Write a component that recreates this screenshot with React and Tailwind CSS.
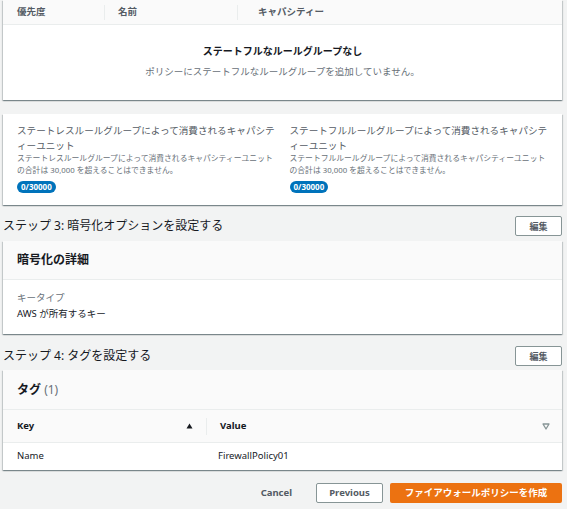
import React from "react";

const font = { fontFamily: '"Noto Sans", "Noto Sans CJK JP", sans-serif' };

function EditButton() {
  return (
    <button className="w-[47px] h-[20px] border border-[#879596] rounded-[2px] bg-white text-[9px] font-bold text-[#545b64] leading-none">
      編集
    </button>
  );
}

function Card({ children, className = "" }) {
  return (
    <div className={"bg-white shadow-[0_1px_1px_0_rgba(0,28,36,0.3),1px_1px_1px_0_rgba(0,28,36,0.15),-1px_1px_1px_0_rgba(0,28,36,0.15)] " + className}>
      {children}
    </div>
  );
}

export default function App() {
  return (
    <div className="w-[567px] h-[509px] bg-[#f2f3f3] overflow-hidden pl-[3px] pr-[5px]" style={font}>
      {/* Card 1 */}
      <Card className="h-[100px] flex flex-col">
        <div className="h-[25px] bg-[#fafafa] border-b border-[#eaeded] grid grid-cols-[101px_133px_1fr] items-center text-[9.5px] font-bold text-[#545b64]">
          <div className="pl-[14px] leading-none">優先度</div>
          <div className="pl-[13px] border-l border-[#eaeded] h-[15px] flex items-center">名前</div>
          <div className="pl-[20px] border-l border-[#eaeded] h-[15px] flex items-center">キャパシティー</div>
        </div>
        <div className="flex-1 flex flex-col items-center pt-[19px]">
          <div className="text-[10px] font-bold text-[#16191f] leading-[14px]">ステートフルなルールグループなし</div>
          <div className="text-[9.5px] text-[#687078] leading-[14px] mt-[7px]">ポリシーにステートフルなルールグループを追加していません。</div>
        </div>
      </Card>

      {/* Card 2 */}
      <Card className="mt-[14px] h-[91px] px-[14px] pt-[10px] grid grid-cols-2 gap-x-[14px]">
        {["ステートレス", "ステートフル"].map((k) => (
          <div key={k} className="flex flex-col items-start">
            <p className="text-[9.6px] leading-[14.5px] text-[#545b64]">{k}ルールグループによって消費されるキャパシティーユニット</p>
            <p className="text-[7.8px] leading-[11.5px] text-[#687078]">{k}ルールグループによって消費されるキャパシティーユニットの合計は 30,000 を超えることはできません。</p>
            <div className="mt-[5px] h-[12px] px-[4px] rounded-full bg-[#0073bb] text-white text-[8px] font-bold leading-[12px]">0/30000</div>
          </div>
        ))}
      </Card>

      {/* Step 3 */}
      <div className="mt-[11px] flex items-center justify-between">
        <div className="text-[12px] text-[#16191f] leading-none">ステップ 3: 暗号化オプションを設定する</div>
        <EditButton />
      </div>
      <Card className="mt-[5px] h-[93px] flex flex-col">
        <div className="h-[39px] bg-[#fafafa] border-b border-[#eaeded] flex items-center pl-[14px]">
          <div className="text-[12px] font-bold text-[#16191f] leading-none">暗号化の詳細</div>
        </div>
        <div className="pl-[14px] pt-[11px] flex flex-col gap-[3px]">
          <div className="text-[9.5px] text-[#687078] leading-[13px]">キータイプ</div>
          <div className="text-[9.5px] text-[#16191f] leading-[13px]">AWS が所有するキー</div>
        </div>
      </Card>

      {/* Step 4 */}
      <div className="mt-[12px] flex items-center justify-between">
        <div className="text-[12px] text-[#16191f] leading-none">ステップ 4: タグを設定する</div>
        <EditButton />
      </div>
      <Card className="mt-[4px] h-[100px] flex flex-col">
        <div className="h-[40px] bg-[#fafafa] border-b border-[#eaeded] flex items-center pl-[14px]">
          <div className="text-[12px] font-bold text-[#16191f] leading-none">
            タグ <span className="font-normal text-[#687078]">(1)</span>
          </div>
        </div>
        <div className="h-[33px] bg-[#fafafa] border-b border-[#eaeded] grid grid-cols-[203px_1fr] items-center text-[9.5px] font-bold text-[#16191f]">
          <div className="pl-[14px] pr-[13px] flex items-center justify-between">
            <span>Key</span>
            <svg width="7" height="6" viewBox="0 0 7 6"><path d="M3.5 0.5 L6.5 5.5 L0.5 5.5 Z" fill="#16191f" /></svg>
          </div>
          <div className="border-l border-[#eaeded] h-[17px] pl-[13px] pr-[12px] flex items-center justify-between">
            <span>Value</span>
            <svg width="8" height="7" viewBox="0 0 8 7"><path d="M1 1 L7 1 L4 6 Z" fill="none" stroke="#879596" strokeWidth="1.3" strokeLinejoin="round" /></svg>
          </div>
        </div>
        <div className="flex-1 grid grid-cols-[201px_1fr] items-center text-[9.5px] text-[#16191f]">
          <div className="pl-[14px]">Name</div>
          <div className="pl-[14px]">FirewallPolicy01</div>
        </div>
      </Card>

      {/* Footer */}
      <div className="mt-[13px] flex items-center justify-end">
        <button className="h-[20px] px-[2px] text-[9.5px] font-bold text-[#545b64] mr-[22px]">Cancel</button>
        <button className="h-[20px] w-[67px] border border-[#879596] rounded-[2px] bg-white text-[9.5px] font-bold text-[#545b64] mr-[7px]">Previous</button>
        <button className="h-[20px] w-[172px] rounded-[2px] bg-[#ec7211] text-white text-[9.5px] font-bold">ファイアウォールポリシーを作成</button>
      </div>
    </div>
  );
}
